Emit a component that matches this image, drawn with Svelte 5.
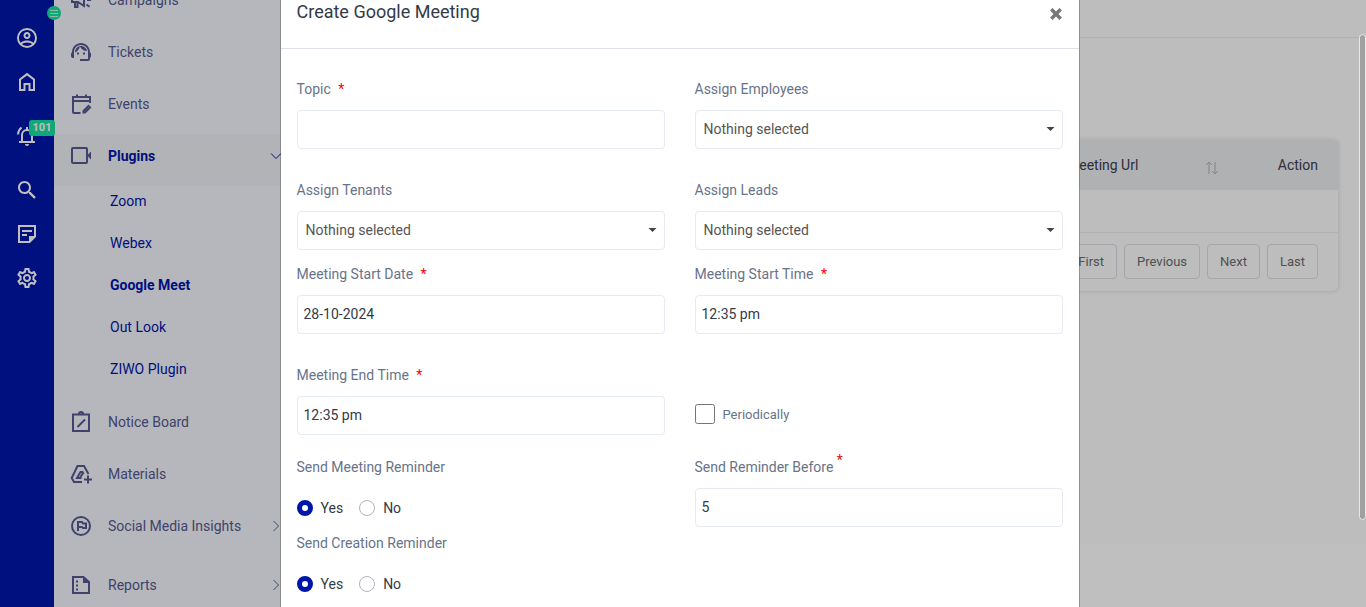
<script>
  const railIcons = [
    { id: 'account', label: 'Account' },
    { id: 'home', label: 'Home' },
    { id: 'bell', label: 'Notifications', badge: 101 },
    { id: 'search', label: 'Search' },
    { id: 'note', label: 'Notes' },
    { id: 'settings', label: 'Settings' },
  ];

  const menu = [
    { icon: 'campaign', text: 'Campaigns' },
    { icon: 'agent', text: 'Tickets' },
    { icon: 'calendar', text: 'Events' },
    {
      icon: 'video',
      text: 'Plugins',
      open: true,
      children: ['Zoom', 'Webex', 'Google Meet', 'Out Look', 'ZIWO Plugin'],
    },
    { icon: 'board', text: 'Notice Board' },
    { icon: 'materials', text: 'Materials' },
    { icon: 'flag', text: 'Social Media Insights', more: true },
    { icon: 'report', text: 'Reports', more: true, spaced: true },
  ];

  const pages = ['First', 'Previous', 'Next', 'Last'];

  let current = $state('Google Meet');
  let showModal = $state(true);
  let form = $state({
    topic: '',
    employees: '',
    tenants: '',
    leads: '',
    date: '28-10-2024',
    start: '12:35 pm',
    end: '12:35 pm',
    periodic: false,
    before: '5',
    meetingReminder: 'Yes',
    creationReminder: 'Yes',
  });
</script>

{#snippet icon(name)}
  <svg class="icon" viewBox="0 0 24 24" aria-hidden="true">
    {#if name === 'account'}
      <path class="solid" d="M12,2A10,10 0 0,0 2,12A10,10 0 0,0 12,22A10,10 0 0,0 22,12A10,10 0 0,0 12,2M7.07,18.28C7.5,17.38 10.12,16.5 12,16.5C13.88,16.5 16.5,17.38 16.93,18.28C15.57,19.36 13.86,20 12,20C10.14,20 8.43,19.36 7.07,18.28M18.36,16.83C16.93,15.09 13.46,14.5 12,14.5C10.54,14.5 7.07,15.09 5.64,16.83C4.62,15.5 4,13.82 4,12C4,7.59 7.59,4 12,4C16.41,4 20,7.59 20,12C20,13.82 19.38,15.5 18.36,16.83M12,6C10.06,6 8.5,7.56 8.5,9.5C8.5,11.44 10.06,13 12,13C13.94,13 15.5,11.44 15.5,9.5C15.5,7.56 13.94,6 12,6M12,11A1.5,1.5 0 0,1 10.5,9.5A1.5,1.5 0 0,1 12,8A1.5,1.5 0 0,1 13.5,9.5A1.5,1.5 0 0,1 12,11Z" />
    {:else if name === 'home'}
      <path d="M5 20V9.500l7-5.400 7 5.400V20h-4.500v-6h-5v6z" />
    {:else if name === 'bell'}
      <path d="M7 18v-7a5 5 0 0 1 10 0v7M4 18h16M12 6V3" />
      <path d="M3 10.500c.1-3 1.300-5.300 3.500-7M21 10.500c-.1-3-1.300-5.300-3.500-7" />
      <path class="solid" d="M10 20h4a2 2 0 0 1-4 0z" />
    {:else if name === 'search'}
      <path class="solid" d="M15.5 14h-.79l-.28-.27C15.41 12.59 16 11.11 16 9.5 16 5.91 13.09 3 9.5 3S3 5.91 3 9.5 5.91 16 9.5 16c1.61 0 3.09-.59 4.23-1.57l.27.28v.79l5 4.99L20.49 19l-4.99-5zm-6 0C7.01 14 5 11.99 5 9.5S7.01 5 9.5 5 14 7.01 14 9.500 11.990 14 9.500 14z" />
      <path d="M14.500 14.500l5.500 5.500" />
    {:else if name === 'note'}
      <path d="M4 4h16v10.500L14.500 20H4z" />
      <path class="solid" d="M14 14h7l-7 7z" />
      <path d="M7 9h10M7 13h5" />
    {:else if name === 'settings'}
      <path class="solid" d="M19.43 12.98c.04-.32.07-.64.07-.98 0-.34-.03-.66-.07-.98l2.11-1.65c.19-.15.24-.42.12-.64l-2-3.46c-.09-.16-.26-.25-.44-.25-.06 0-.12.01-.17.03l-2.49 1c-.52-.4-1.08-.73-1.69-.98l-.38-2.65C14.46 2.18 14.25 2 14 2h-4c-.25 0-.46.18-.49.42l-.38 2.65c-.61.25-1.17.59-1.69.98l-2.49-1c-.06-.02-.12-.03-.18-.03-.17 0-.34.09-.43.25l-2 3.46c-.13.22-.07.49.12.64l2.11 1.65c-.04.32-.07.65-.07.98 0 .33.03.66.07.98l-2.11 1.65c-.19.15-.24.42-.12.64l2 3.46c.09.16.26.25.44.25.06 0 .12-.01.17-.03l2.49-1c.52.4 1.08.73 1.69.98l.38 2.65c.03.24.24.42.49.42h4c.25 0 .46-.18.49-.42l.38-2.65c.61-.25 1.17-.59 1.69-.98l2.49 1c.06.02.12.03.18.03.17 0 .34-.09.43-.25l2-3.46c.12-.22.07-.49-.12-.64l-2.11-1.65zm-1.98-1.71c.04.31.05.52.05.73 0 .21-.02.43-.05.73l-.14 1.13.89.7 1.08.84-.7 1.21-1.27-.51-1.04-.42-.9.68c-.43.32-.84.56-1.25.73l-1.06.43-.16 1.13-.2 1.35h-1.4l-.19-1.35-.16-1.13-1.06-.43c-.43-.18-.83-.41-1.23-.71l-.91-.7-1.06.43-1.27.51-.7-1.21 1.08-.84.89-.7-.14-1.13c-.03-.31-.05-.54-.05-.74s.02-.43.05-.73l.14-1.13-.89-.7-1.08-.84.7-1.21 1.27.51 1.04.42.9-.68c.43-.32.84-.56 1.25-.73l1.06-.43.16-1.13.2-1.35h1.39l.19 1.35.16 1.13 1.06.43c.43.18.83.41 1.23.71l.91.7 1.06-.43 1.27-.51.7 1.21-1.07.85-.89.7.14 1.13zM12 8c-2.21 0-4 1.79-4 4s1.79 4 4 4 4-1.79 4-4-1.79-4-4-4zm0 6c-1.1 0-2-.9-2-2s.9-2 2-2 2 .9 2 2-.9 2-2 2z" />
    {:else if name === 'campaign'}
      <path d="M3 10h6l6-4v12l-6-4H3zM6 14v5h2.500v-5M18 12h4M17.500 16.500l3 2.300M17.500 7.500l3-2.300" />
    {:else if name === 'agent'}
      <path class="solid" d="M21,12.22C21,6.73,16.74,3,12,3c-4.69,0-9,3.65-9,9.28C2.4,12.62,2,13.26,2,14v2c0,1.1,0.9,2,2,2h1v-6.1c0-3.87,3.13-7,7-7s7,3.13,7,7V19h-8v2h8c1.1,0,2-0.9,2-2v-1.22c0.59-0.31,1-0.92,1-1.64v-2.3C22,13.14,21.59,12.53,21,12.22z" />
      <path class="solid" d="M18,11.03C17.52,8.18,15.04,6,12.05,6c-3.03,0-6.29,2.51-6.03,6.45c2.47-1.01,4.33-3.21,4.86-5.89C12.19,9.19,14.88,11,18,11.03z" />
      <path class="solid" d="M8 12.500h2v2H8zM14 12.500h2v2h-2z" />
    {:else if name === 'calendar'}
      <path d="M11.500 21H5a1 1 0 0 1-1-1V5h17v6M4 9h17M8 2.500V5M17 2.500V5" />
      <path d="M14.500 20.500v-1.500l5-5 1.500 1.500-5 5z" />
    {:else if name === 'video'}
      <rect x="3" y="4" width="15" height="15" rx="1" />
      <path class="solid" d="M18 11.500l4-4v8z" />
    {:else if name === 'board'}
      <path d="M4 4.500h16V21H4zM8.500 17l7.500-7.500M10 4a2 2 0 0 1 4 0" />
    {:else if name === 'materials'}
      <path d="M13 20H5l-2.300-4L8.500 4h6.500l4.500 8" />
      <path d="M12.500 16H8l3.500-6h2l1 2M11 16l3-5M15 17.500h8M19 13.500v8" />
    {:else if name === 'flag'}
      <circle cx="12" cy="12" r="9" />
      <path d="M9 17V8h4l1 1.500h3v4.500h-3L13 13H9" />
    {:else if name === 'report'}
      <path d="M4 4h10.500L20 9v11H4z" />
      <path class="solid" d="M14 3l7 7h-7zM7 7.500h2v2H7zM7 11.500h2v2H7zM7 15.500h2v2H7z" />
    {/if}
  </svg>
{/snippet}

{#snippet picker(id, label, key)}
  <div class="field">
    <label for={id}>{label}</label>
    <div class="select">
      <select {id} bind:value={form[key]}>
        <option value="">Nothing selected</option>
      </select>
      <svg class="caret" viewBox="0 0 8 4" aria-hidden="true"><path d="M0 0h8L4 4z" /></svg>
    </div>
  </div>
{/snippet}

{#snippet yesNo(name, label, key)}
  <fieldset>
    <legend>{label}</legend>
    <div class="radios">
      {#each ['Yes', 'No'] as option}
        <label>
          <input type="radio" {name} value={option} bind:group={form[key]} />
          {option}
        </label>
      {/each}
    </div>
  </fieldset>
{/snippet}

<div class="shell">
  <nav class="rail" aria-label="Shortcuts">
    {#each railIcons as item (item.id)}
      <a class="rail-item" class:wide={item.badge} href="#{item.id}" aria-label={item.label}>
        {@render icon(item.id)}
        {#if item.badge}<span class="badge">{item.badge}</span>{/if}
      </a>
    {/each}
    <button class="toggle" type="button" aria-label="Toggle menu">
      <svg viewBox="0 0 14 14"><path d="M3 4.500h8M3 7.500h8M3 10.500h8" /></svg>
    </button>
  </nav>

  <aside class="sidebar">
    <ul class="menu">
      {#each menu as item (item.text)}
        <li class:spaced={item.spaced}>
          <a class="menu-item" class:active={item.open} href="#{item.icon}">
            {@render icon(item.icon)}
            <span>{item.text}</span>
            {#if item.open || item.more}
              <svg class="chevron" class:down={item.open} viewBox="0 0 12 12"><path d="M3.500 1l5 5-5 5" /></svg>
            {/if}
          </a>
          {#if item.children}
            <ul class="submenu">
              {#each item.children as child}
                <li>
                  <a href="#plugin" class:current={child === current} onclick={() => (current = child)}>{child}</a>
                </li>
              {/each}
            </ul>
          {/if}
        </li>
      {/each}
    </ul>
  </aside>

  <main>
    <header class="topbar"></header>
    <section class="content">
      <div class="card">
        <table>
          <thead>
            <tr>
              <td></td>
              <th class="url">
                <div class="sortable">
                  Meeting Url
                  <svg viewBox="0 0 14 14"><path d="M4 13V1M1 4l3-3 3 3M10 1v12M7 10l3 3 3-3" /></svg>
                </div>
              </th>
              <th class="action">Action</th>
            </tr>
          </thead>
          <tbody>
            <tr><td colspan="3"></td></tr>
          </tbody>
        </table>
        <div class="pager">
          {#each pages as page}
            <button type="button">{page}</button>
          {/each}
        </div>
      </div>
    </section>
  </main>
</div>

{#if showModal}
  <div class="backdrop">
    <div class="modal" role="dialog" aria-modal="true" aria-labelledby="modal-title">
      <header class="modal-header">
        <h5 id="modal-title">Create Google Meeting</h5>
        <button class="close" type="button" aria-label="Close" onclick={() => (showModal = false)}>
          <svg viewBox="0 0 12 12"><path d="M2 2l8 8M10 2l-8 8" /></svg>
        </button>
      </header>

      <form class="modal-body">
        <div class="row">
          <div class="field">
            <label for="topic">Topic <span class="req">*</span></label>
            <input id="topic" type="text" bind:value={form.topic} />
          </div>
          {@render picker('employees', 'Assign Employees', 'employees')}
        </div>

        <div class="row">
          {@render picker('tenants', 'Assign Tenants', 'tenants')}
          {@render picker('leads', 'Assign Leads', 'leads')}
        </div>

        <div class="row tight">
          <div class="field">
            <label for="date">Meeting Start Date <span class="req">*</span></label>
            <input id="date" type="text" bind:value={form.date} />
          </div>
          <div class="field">
            <label for="start">Meeting Start Time <span class="req">*</span></label>
            <input id="start" type="text" bind:value={form.start} />
          </div>
        </div>

        <div class="row">
          <div class="field">
            <label for="end">Meeting End Time <span class="req">*</span></label>
            <input id="end" type="text" bind:value={form.end} />
          </div>
          <div class="check">
            <input id="periodic" type="checkbox" bind:checked={form.periodic} />
            <label for="periodic">Periodically</label>
          </div>
        </div>

        <div class="row reminders">
          <div class="choices">
            {@render yesNo('meeting-reminder', 'Send Meeting Reminder', 'meetingReminder')}
            {@render yesNo('creation-reminder', 'Send Creation Reminder', 'creationReminder')}
          </div>
          <div class="field">
            <label for="before">Send Reminder Before <sup>*</sup></label>
            <input id="before" type="text" bind:value={form.before} />
          </div>
        </div>
      </form>
    </div>
    <div class="scroll-thumb"></div>
  </div>
{/if}

<style>
  :global(body) {
    font-family: Roboto, 'Liberation Sans', sans-serif;
    font-size: 14px;
    background: #fff;
  }
  * { box-sizing: border-box; }
  a { color: inherit; text-decoration: none; }
  ul { list-style: none; margin: 0; padding: 0; }
  button, input, select { font: inherit; }
  svg { fill: none; stroke: currentColor; flex: none; }

  .shell {
    display: flex;
    height: 100vh;
    overflow: hidden;
  }
  .icon {
    display: block;
    width: 24px;
    height: 24px;
    stroke-width: 2;
  }
  .icon .solid { fill: currentColor; stroke: none; }

  /* Icon rail */
  .rail {
    position: relative;
    z-index: 1;
    flex: none;
    width: 54px;
    padding-top: 16px;
    background: #0016a8;
    color: #fff;
  }
  .rail-item {
    position: relative;
    display: grid;
    place-items: center;
    height: 44px;
  }
  .rail-item.wide { height: 64px; }
  .badge {
    position: absolute;
    top: 16px;
    left: 29px;
    width: 26px;
    height: 16px;
    border-radius: 3px;
    background: #16e0a0;
    font-size: 11px;
    font-weight: 700;
    line-height: 16px;
    text-align: center;
  }
  .toggle {
    position: absolute;
    top: 6px;
    right: -7px;
    width: 14px;
    height: 14px;
    padding: 0;
    border: none;
    border-radius: 50%;
    background: #16e0a0;
    color: #c0f7e4;
  }
  .toggle svg { display: block; width: 14px; height: 14px; }

  /* Sidebar */
  .sidebar {
    flex: none;
    width: 240px;
    background: #f3f4fb;
    color: #555a90;
    overflow: hidden;
  }
  .menu { margin-top: -22px; }
  .menu-item {
    display: flex;
    align-items: center;
    height: 52px;
    padding: 0 12px 8px 15px;
    line-height: 22px;
  }
  .menu-item span { flex: 1; margin-left: 15px; }
  .menu-item.active { background: #eeeff5; }
  .menu-item.active span { color: #0016a8; font-weight: 700; }
  .spaced { margin-top: 7px; }
  .chevron { width: 12px; height: 12px; }
  .chevron.down { transform: rotate(90deg); color: #0016a8; }
  .submenu {
    display: grid;
    gap: 22px;
    padding: 5px 0 21px 56px;
    color: #0016a8;
    line-height: 20px;
  }
  .submenu .current { font-weight: 700; }

  /* Page behind the dialog */
  main { flex: 1; min-width: 0; }
  .topbar {
    height: 38px;
    background: #fcfcfc;
    border-bottom: 1px solid #ededf0;
  }
  .content {
    padding: 102px 28px 253px;
    background: #fcfcfc;
  }
  .card {
    border-radius: 5px;
    box-shadow: 0 0 4px rgba(60, 70, 110, 0.2);
    overflow: hidden;
  }
  table { width: 100%; border-collapse: collapse; table-layout: fixed; }
  thead { background: #ebecef; color: #3c4050; }
  th { height: 50px; padding: 0; font-weight: 400; text-align: left; }
  .url { width: 172px; }
  .action { width: 99px; padding-right: 20px; text-align: right; }
  .sortable { display: flex; justify-content: space-between; align-items: center; }
  .sortable svg { width: 14px; height: 14px; margin: 6px 20px 0 0; color: #b0b0b5; }
  tbody td { height: 42px; border-bottom: 1px solid #ededf0; }
  .pager {
    display: flex;
    justify-content: flex-end;
    gap: 7px;
    padding: 11px 20px 12px;
  }
  .pager button {
    height: 35px;
    padding: 0 12px;
    border: 1px solid #dcdee4;
    border-radius: 4px;
    background: transparent;
    color: #6a6d74;
    font-size: 13px;
  }

  /* Dialog */
  .backdrop {
    position: fixed;
    inset: 0;
    z-index: 10;
    display: flex;
    justify-content: center;
    padding-right: 7px;
    background: rgba(0, 0, 0, 0.25);
    overflow: hidden;
  }
  .modal {
    width: 100%;
    max-width: 800px;
    min-height: 100%;
    border: 1px solid rgba(0, 0, 0, 0.24);
    border-width: 0 1px;
    background: #fff;
    background-clip: padding-box;
  }
  .modal-header {
    display: flex;
    justify-content: space-between;
    padding: 0 16px 24px;
    border-bottom: 1px solid #dee2e8;
  }
  h5 {
    margin: 0;
    color: #343a48;
    font-size: 18px;
    font-weight: 400;
    line-height: 24px;
  }
  .close {
    padding: 4px 0 0;
    border: none;
    background: none;
    color: #777;
    cursor: pointer;
  }
  .close svg { display: block; width: 14px; height: 14px; stroke-width: 3; }

  .modal-body { padding: 30px 16px; }
  .row {
    display: grid;
    grid-template-columns: 1fr 1fr;
    gap: 30px;
  }
  .row + .row { margin-top: 31px; }
  .row + .row.tight { margin-top: 14px; }
  .row + .row.reminders { margin-top: 22px; }

  .field label, legend {
    display: block;
    height: 21px;
    margin-bottom: 10px;
    padding: 0;
    color: #68738a;
    line-height: 21px;
  }
  .req { margin-left: 4px; color: #f00; }
  sup { color: #e01010; line-height: 0; vertical-align: 7px; font-size: 14px; }
  .field input, select {
    display: block;
    width: 100%;
    height: 39px;
    padding: 0 6px 2px;
    border: 1px solid #e6ebf3;
    border-radius: 4px;
    background: #fff;
    color: #343a48;
    outline: none;
  }
  .select { position: relative; }
  select { padding: 0 8px 2px; appearance: none; color: #555; }
  .caret {
    position: absolute;
    top: 17px;
    right: 8px;
    width: 9px;
    height: 4px;
    fill: #444;
    stroke: none;
    pointer-events: none;
  }
  .field input:focus, select:focus { border-color: #0016a8; }

  .check {
    display: flex;
    align-items: center;
    align-self: end;
    gap: 8px;
    padding-bottom: 11px;
    color: #68738a;
    font-size: 13px;
  }
  .check input { width: 20px; height: 20px; margin: 0; }

  fieldset { margin: 0; padding: 0; border: none; }
  fieldset + fieldset { margin-top: 13px; }
  legend { margin-bottom: 18px; }
  .radios { display: flex; gap: 16px; line-height: 24px; color: #343a48; }
  .radios label { display: flex; align-items: center; gap: 8px; }
  .radios input {
    appearance: none;
    width: 16px;
    height: 16px;
    margin: 0;
    border: 1px solid #adb5bd;
    border-radius: 50%;
    background: #fff;
  }
  .radios input:checked { border: 5px solid #0016a8; }

  .scroll-thumb {
    position: absolute;
    top: 34px;
    right: 0;
    width: 7px;
    height: 80%;
    border: 1px solid #e8e8e8;
    border-radius: 4px;
    background: #a0a0a0;
  }
</style>
